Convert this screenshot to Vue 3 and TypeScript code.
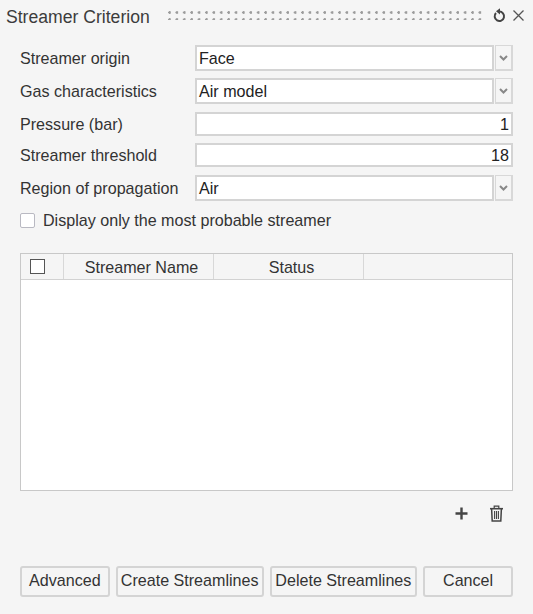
<script setup lang="ts">
interface Field {
  label: string
  value: string
  kind: 'select' | 'number'
}

const fields: Field[] = [
  { label: 'Streamer origin', value: 'Face', kind: 'select' },
  { label: 'Gas characteristics', value: 'Air model', kind: 'select' },
  { label: 'Pressure (bar)', value: '1', kind: 'number' },
  { label: 'Streamer threshold', value: '18', kind: 'number' },
  { label: 'Region of propagation', value: 'Air', kind: 'select' },
]
</script>

<template>
  <div class="dialog">
    <header class="title-bar">
      <span class="title">Streamer Criterion</span>
      <span class="grip"></span>
      <svg class="icon reset" width="15" height="15" viewBox="0 0 15 15" fill="none">
        <path d="M4 5 A4.7 4.7 0 1 0 7.2 3.6" stroke="#444" stroke-width="2" />
        <path d="M8 0.3 V6.4 L4 3.3 Z" fill="#444" />
      </svg>
      <svg class="icon close" width="13" height="13" viewBox="0 0 13 13" fill="none">
        <path d="M1.5 1.5 L11.5 11.5 M11.5 1.5 L1.5 11.5" stroke="#555" stroke-width="1.3" />
      </svg>
    </header>

    <div class="form">
      <div v-for="f in fields" :key="f.label" class="row" :class="f.kind">
        <label class="label">{{ f.label }}</label>
        <div class="control">
          <div class="box">{{ f.value }}</div>
          <div v-if="f.kind === 'select'" class="arrow">
            <svg width="9" height="6" viewBox="0 0 9 6" fill="none">
              <path d="M1 1 L4.5 4.5 L8 1" stroke="#888" stroke-width="2" />
            </svg>
          </div>
        </div>
      </div>
    </div>

    <label class="check-row">
      <span class="check"></span>
      <span>Display only the most probable streamer</span>
    </label>

    <div class="table">
      <div class="thead">
        <div class="th c0"><span class="head-check"></span></div>
        <div class="th c1">Streamer Name</div>
        <div class="th c2">Status</div>
      </div>
    </div>

    <div class="table-tools">
      <svg width="13" height="13" viewBox="0 0 13 13" fill="none">
        <path d="M6.5 0.5 V12.5 M0.5 6.5 H12.5" stroke="#444" stroke-width="2.4" />
      </svg>
      <svg width="15" height="17" viewBox="0 0 15 17" fill="none" stroke="#444">
        <path d="M1 3.7 H14" stroke-width="1.6" />
        <path d="M5.2 3.2 V1.2 H9.8 V3.2" stroke-width="1.2" />
        <path d="M2.6 3.5 L3.2 16 H11.8 L12.4 3.5" stroke-width="1.5" />
        <path d="M5.6 6 V14 M7.5 6 V14 M9.4 6 V14" stroke-width="1.1" />
      </svg>
    </div>

    <footer class="actions">
      <button class="btn advanced">Advanced</button>
      <button class="btn wide">Create Streamlines</button>
      <button class="btn wide">Delete Streamlines</button>
      <button class="btn cancel">Cancel</button>
    </footer>
  </div>
</template>

<style scoped>
.dialog {
  width: 533px;
  height: 614px;
  box-sizing: border-box;
  background: #f5f5f5;
  padding: 6px 20px 0;
  font-family: "Liberation Sans", Arial, sans-serif;
  font-size: 16.1px;
  color: #333;
  display: flex;
  flex-direction: column;
}
.title-bar {
  display: flex;
  align-items: center;
  height: 22px;
  margin: 0 -20px 0 -14px;
}
.title {
  font-size: 17.6px;
  color: #3c3c3c;
  width: 162px;
  flex: none;
}
.grip {
  width: 314px;
  height: 9px;
  flex: none;
  margin-bottom: 3px;
  background-image: radial-gradient(circle at 1.5px 1.5px, #9c9c9c 1.2px, transparent 1.5px);
  background-size: 7.4px 7px;
}
.icon {
  flex: none;
  margin-bottom: 4px;
}
.reset {
  margin-left: 10px;
}
.close {
  margin-left: 5px;
}
.form {
  margin-top: 17px;
  display: flex;
  flex-direction: column;
  gap: 7px;
}
.row {
  display: flex;
  align-items: center;
}
.row.select {
  height: 26px;
}
.row.number {
  height: 24px;
}
.select + .number,
.number + .select {
  margin-top: 1px;
}
.label {
  width: 175px;
  flex: none;
  white-space: nowrap;
}
.control {
  flex: 1;
  display: flex;
  height: 100%;
  gap: 1px;
}
.box {
  flex: 1;
  box-sizing: border-box;
  background: #fff;
  border: 2px solid #d4d4d4;
  padding: 0 2px;
  display: flex;
  align-items: center;
  color: #222;
}
.row.number .box {
  justify-content: flex-end;
}
.arrow {
  width: 18px;
  box-sizing: border-box;
  flex: none;
  border: 1px solid #d8d8d8;
  border-right-width: 2px;
  border-bottom-width: 2px;
  display: flex;
  align-items: center;
  justify-content: center;
  background: #f5f5f5;
}
.check-row {
  display: flex;
  align-items: center;
  gap: 8px;
  margin-top: 9px;
  height: 20px;
}
.check {
  width: 15px;
  height: 15px;
  box-sizing: border-box;
  background: #fff;
  border: 1px solid #b9b9c2;
  border-radius: 2px;
}
.table {
  margin-top: 23px;
  height: 238px;
  box-sizing: border-box;
  background: #fff;
  border: 1px solid #c8c8c8;
}
.thead {
  display: flex;
  height: 26px;
  box-sizing: border-box;
  background: #f5f5f5;
  border-bottom: 1px solid #d2d2d2;
}
.th {
  box-sizing: border-box;
  display: flex;
  align-items: center;
  justify-content: center;
  border-right: 1px solid #d8d8d8;
  padding-top: 1px;
}
.c0 {
  width: 43px;
  justify-content: flex-start;
  padding: 0 0 0 9px;
}
.c1,
.c2 {
  width: 150px;
  padding-left: 6px;
}
.head-check {
  width: 15px;
  height: 15px;
  box-sizing: border-box;
  background: #fff;
  border: 1px solid #555;
}
.table-tools {
  display: flex;
  justify-content: flex-end;
  align-items: center;
  gap: 21px;
  height: 16px;
  margin-top: 14px;
  padding-right: 9px;
}
.actions {
  display: flex;
  margin-top: 45px;
  gap: 6px;
}
.btn {
  height: 31px;
  box-sizing: border-box;
  background: #f5f5f5;
  border: 2px solid #d4d4d4;
  border-radius: 3px;
  font: inherit;
  color: #333;
  padding: 0 0 2px;
}
.advanced {
  width: 90px;
}
.wide {
  width: 148px;
}
.cancel {
  width: 90px;
}
</style>
